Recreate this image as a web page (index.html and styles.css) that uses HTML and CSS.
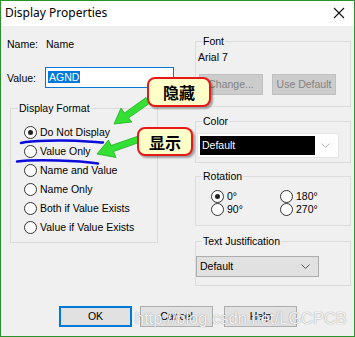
FILE: index.html
```html
<!DOCTYPE html>
<html>
<head>
<meta charset="utf-8">
<link rel="stylesheet" href="styles.css">
</head>
<body>
<div class="window">
  <div class="titlebar">
    <span class="title">Display Properties</span>
    <svg class="close" width="12" height="12" viewBox="0 0 12 12"><path d="M1 1 L11 11 M11 1 L1 11" stroke="#111" stroke-width="1.1" fill="none"/></svg>
  </div>
  <div class="body">
    <div class="columns">
      <div class="left">
        <div class="name-row"><span class="lbl">Name:</span><span>Name</span></div>
        <div class="value-row"><span class="lbl lbl-v">Value:</span><div class="input"><span class="sel">AGND</span></div></div>
        <div class="group fmt">
          <div class="legend">Display Format</div>
          <div class="radio-list">
            <div class="radio-row"><span class="radio on"></span><span>Do Not Display</span></div>
            <div class="radio-row"><span class="radio"></span><span>Value Only</span></div>
            <div class="radio-row"><span class="radio"></span><span>Name and Value</span></div>
            <div class="radio-row"><span class="radio"></span><span>Name Only</span></div>
            <div class="radio-row"><span class="radio"></span><span>Both if Value Exists</span></div>
            <div class="radio-row"><span class="radio"></span><span>Value if Value Exists</span></div>
          </div>
        </div>
      </div>
      <div class="right">
        <div class="group font-g">
          <div class="legend">Font</div>
          <div class="font-name">Arial 7</div>
          <div class="font-btns">
            <div class="btn disabled">Change...</div>
            <div class="btn disabled">Use Default</div>
          </div>
        </div>
        <div class="group color-g">
          <div class="legend">Color</div>
          <div class="combo">
            <div class="swatch">Default</div>
            <svg class="chev" width="9" height="5" viewBox="0 0 9 5"><path d="M0.5 0.5 L4.5 4.5 L8.5 0.5" stroke="#b0b0b0" fill="none"/></svg>
          </div>
        </div>
        <div class="group rot-g">
          <div class="legend">Rotation</div>
          <div class="rot-grid">
            <div class="radio-row small"><span class="radio on"></span><span>0°</span></div>
            <div class="radio-row small"><span class="radio"></span><span>180°</span></div>
            <div class="radio-row small"><span class="radio"></span><span>90°</span></div>
            <div class="radio-row small"><span class="radio"></span><span>270°</span></div>
          </div>
        </div>
        <div class="group just-g">
          <div class="legend">Text Justification</div>
          <div class="select">
            <span>Default</span>
            <svg class="chev" width="9" height="5" viewBox="0 0 9 5"><path d="M0.5 0.5 L4.5 4.5 L8.5 0.5" stroke="#555" fill="none"/></svg>
          </div>
        </div>
      </div>
    </div>
    <div class="buttons">
      <div class="btn ok">OK</div>
      <div class="btn">Cancel</div>
      <div class="btn help">Help</div>
    </div>
  </div>

  <svg class="annot" width="355" height="337" viewBox="0 0 355 337">
    <path d="M21 143 C32 140, 45 141, 58 140.5 C75 140, 92 142, 103 142.5" stroke="#0b0bdc" stroke-width="2.4" fill="none" stroke-linecap="round"/>
    <path d="M17 161.5 C28 160, 42 160, 58 160.5 C75 161, 88 162, 98 163.5" stroke="#0b0bdc" stroke-width="2.4" fill="none" stroke-linecap="round"/>
    <polygon points="114,124 132,122 128.5,118 150,103 146,97.5 124.5,113 121,108" fill="#33e033" stroke="#1fb01f" stroke-width="0.8" stroke-linejoin="round"/>
    <polygon points="97,154 116,157.5 113.5,151.5 139,142.5 137,136.5 111,145.5 108.5,140" fill="#33e033" stroke="#1fb01f" stroke-width="0.8" stroke-linejoin="round"/>
  </svg>
  <div class="callout c1">隐藏</div>
  <div class="callout c2">显示</div>
  <div class="watermark">http://blog.csdn.net/LGCPCB</div>
</div>
</body>
</html>
```

FILE: styles.css
```css
* { box-sizing: border-box; }
html, body { margin: 0; padding: 0; background: #fff; }
.window {
  position: relative;
  width: 355px;
  height: 337px;
  border: 1px solid #2a922a;
  background: #f0f0f0;
  font-family: "Liberation Sans", Arial, sans-serif;
  font-size: 10.5px;
  color: #000;
  overflow: hidden;
}
.titlebar {
  height: 25px;
  background: #fff;
  display: flex;
  align-items: center;
  justify-content: space-between;
  padding: 0 9px 0 4px;
}
.title {
  font-family: "Noto Sans", "Open Sans", sans-serif;
  font-size: 12px;
  color: #000;
  margin-top: -2px;
}
.close { margin-top: -2px; }
.body { height: 310px; }
.columns { display: flex; }
.left { width: 194px; padding-left: 6px; }
.right { width: 156px; }
.name-row { margin-top: 12px; height: 13px; line-height: 13px; display: flex; }
.lbl { width: 39px; }
.lbl-v { width: 38px; }
.value-row { margin-top: 16px; height: 21px; display: flex; align-items: center; }
.input {
  width: 129px;
  height: 21px;
  border: 1px solid #0078d7;
  background: #fff;
  padding: 3px 2px;
  line-height: 13px;
}
.sel { background: #0078d7; color: #fff; padding: 0 1px; }
.group {
  border: 1px solid #dcdcdc;
  line-height: 13px;
}
.legend {
  display: block;
  width: fit-content;
  background: #f0f0f0;
  margin-top: -7px;
  margin-left: 6px;
  padding: 0 1px;
  height: 13px;
}
.fmt { margin-top: 20px; margin-left: 3px; width: 148px; padding-bottom: 5px; }
.fmt .legend { margin-left: 7px; }
.radio-list { margin-top: 8px; padding-left: 13px; }
.radio-row { height: 19px; display: flex; align-items: center; gap: 3px; }
.radio {
  width: 13px; height: 13px;
  border: 1px solid #333;
  border-radius: 50%;
  background: #fff;
  display: flex; align-items: center; justify-content: center;
  flex: none;
}
.radio.on::after {
  content: "";
  width: 5px; height: 5px;
  border-radius: 50%;
  background: #222;
}
.font-g { margin-top: 15px; padding-bottom: 11px; }
.font-name { margin-top: 3px; padding-left: 2px; height: 13px; }
.font-btns { margin-top: 10px; padding-left: 3px; display: flex; gap: 9px; }
.btn {
  width: 73px;
  height: 21px;
  border: 1px solid #adadad;
  background: #e1e1e1;
  display: flex; align-items: center; justify-content: center;
  line-height: 13px;
}
.btn.disabled {
  width: 64px;
  background: #cccccc;
  border-color: #bfbfbf;
  color: #838383;
}
.color-g { margin-top: 14px; padding-bottom: 4px; }
.combo {
  margin: 5px 0 0 1px;
  width: 142px;
  height: 25px;
  background: #fff;
  border: 1px solid #e6e6e6;
  display: flex;
  align-items: center;
  padding-left: 2px;
}
.swatch {
  width: 115px;
  height: 19px;
  background: #000;
  color: #fff;
  padding-left: 2px;
  line-height: 19px;
}
.combo .chev { margin-left: 6px; }
.rot-g { margin-top: 13px; padding-bottom: 9px; }
.rot-grid {
  display: grid;
  grid-template-columns: 69px 60px;
  padding-left: 15px;
  margin-top: 7px;
}
.radio-row.small { height: 13px; }
.just-g { margin-top: 15px; padding-bottom: 8px; }
.select {
  margin: 8px 0 0 0;
  width: 123px;
  height: 21px;
  background: #e1e1e1;
  border: 1px solid #adadad;
  display: flex;
  align-items: center;
  justify-content: space-between;
  padding: 0 8px 0 3px;
}
.buttons {
  margin-top: 20px;
  padding-left: 58px;
  display: flex;
  gap: 8px;
}
.buttons .help { margin-left: 3px; }
.btn.ok { border: 2px solid #0078d7; }

.annot { position: absolute; left: -1px; top: -1px; pointer-events: none; }
.callout {
  position: absolute;
  background: #ffffc8;
  border: 2px solid #e81818;
  border-radius: 8px;
  box-shadow: 2px 2px 2px rgba(0,0,0,0.35);
  font-family: "Noto Sans CJK SC", sans-serif;
  font-weight: bold;
  font-size: 16px;
  display: flex; align-items: center; justify-content: center;
  line-height: 1;
}
.c1 { left: 146px; top: 76px; width: 64px; height: 30px; }
.c2 { left: 136px; top: 126px; width: 56px; height: 29px; }
.watermark {
  position: absolute;
  left: 134px;
  top: 308px;
  font-family: "Liberation Sans", Arial, sans-serif;
  font-size: 16.5px;
  color: rgba(255,255,255,0.92);
  text-shadow: 0 0 1px rgba(110,110,110,0.9);
  white-space: nowrap;
}
```
